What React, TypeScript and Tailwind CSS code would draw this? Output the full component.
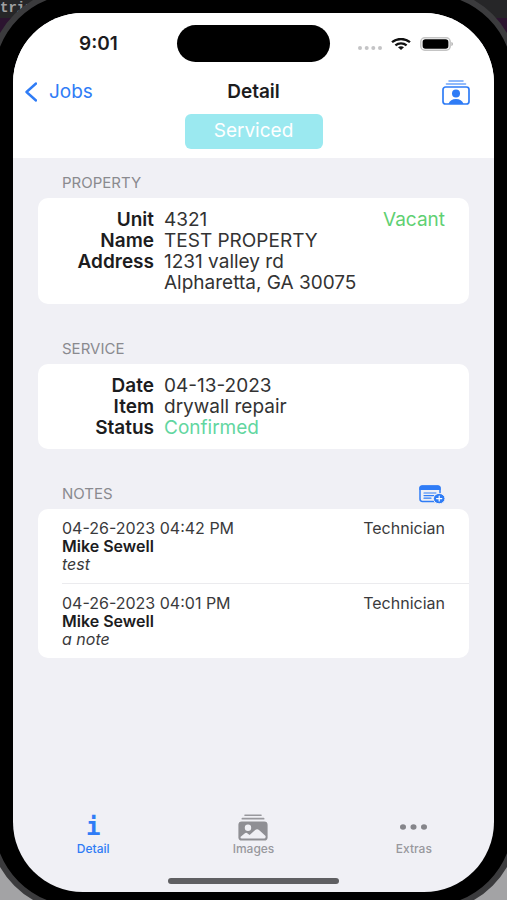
import type { ReactNode } from 'react';

const property = [
  { label: 'Unit', value: '4321' },
  { label: 'Name', value: 'TEST PROPERTY' },
  { label: 'Address', value: '1231 valley rd' },
  { label: '', value: 'Alpharetta, GA 30075' },
];

const service = [
  { label: 'Date', value: '04-13-2023' },
  { label: 'Item', value: 'drywall repair' },
  { label: 'Status', value: 'Confirmed', color: 'text-[#62d6a0]' },
];

const notes = [
  { id: 1, date: '04-26-2023 04:42 PM', author: 'Mike Sewell', text: 'test', role: 'Technician' },
  { id: 2, date: '04-26-2023 04:01 PM', author: 'Mike Sewell', text: 'a note', role: 'Technician' },
];

function WifiIcon() {
  return (
    <svg className="w-5 h-3" viewBox="0 0 20 12" fill="none" stroke="#111" strokeWidth="2.3" preserveAspectRatio="none">
      <path d="M1 4.2C6 -0.1 14 -0.1 19 4.2" />
      <path d="M4.4 7.4C7.6 4.6 12.4 4.6 15.6 7.4" />
      <path d="M7 9.2C8.8 7.8 11.2 7.8 13 9.2L10 12Z" fill="#111" stroke="none" />
    </svg>
  );
}

function BatteryIcon() {
  return (
    <svg className="w-[34px] h-[14px]" viewBox="0 0 34 14" fill="none">
      <rect x="0.8" y="0.8" width="29.4" height="12.4" rx="4" stroke="#c4c4c4" strokeWidth="1.5" />
      <rect x="2.6" y="2.2" width="25.8" height="9.6" rx="2.8" fill="#000" />
      <path d="M31.4 5C33.4 5.6 33.4 8.4 31.4 9Z" fill="#b0b0b0" />
    </svg>
  );
}

function ContactsIcon() {
  return (
    <svg className="w-7 h-[25px]" viewBox="0 0 28 25" fill="none" stroke="#2f7cf6" strokeLinecap="round">
      <path d="M7 1H21" strokeWidth="1.5" opacity="0.7" />
      <path d="M4.5 4H23.5" strokeWidth="1.6" opacity="0.7" />
      <rect x="1" y="7" width="26" height="17" rx="2.6" strokeWidth="1.7" />
      <circle cx="14" cy="13.4" r="4" fill="#2f7cf6" stroke="none" />
      <path d="M6.4 24C7.6 20.4 10.4 18.9 14 18.9S20.4 20.4 21.6 24Z" fill="#2f7cf6" stroke="none" />
    </svg>
  );
}

function AddNoteIcon() {
  return (
    <svg className="w-[26px] h-[19px]" viewBox="0 0 26 19" fill="none">
      <rect x="1" y="1" width="20" height="15.4" rx="2.4" stroke="#2f7cf6" strokeWidth="1.5" />
      <path d="M0.4 5V3A2.6 2.6 0 0 1 3 0.4H19A2.6 2.6 0 0 1 21.6 3V5Z" fill="#2f7cf6" />
      <path d="M5 8H17M5 10.6H15.6M5 13.2H12" stroke="#2f7cf6" strokeWidth="1.2" strokeLinecap="round" />
      <ellipse cx="20.2" cy="13.6" rx="5.8" ry="5.2" fill="#2f7cf6" stroke="#f0f0f5" strokeWidth="1" />
      <path d="M17.6 13.6H22.8M20.2 11.2V16" stroke="#fff" strokeWidth="1.2" strokeLinecap="round" />
    </svg>
  );
}

function ImagesIcon() {
  return (
    <svg className="w-[30px] h-[27px]" viewBox="0 0 30 27" fill="none">
      <path d="M7 1.2H23" stroke="#98989d" strokeWidth="1.6" strokeLinecap="round" />
      <path d="M4.4 4.7H25.6" stroke="#98989d" strokeWidth="1.8" strokeLinecap="round" />
      <rect x="0.4" y="7.4" width="29.2" height="19.2" rx="3.4" fill="#8f8f94" />
      <circle cx="10" cy="13.8" r="3.2" fill="#f0f0f5" />
      <path
        d="M2.4 23L6.6 19.4C7.6 18.6 8.6 18.6 9.6 19.4L11.6 21L17.2 16C18.4 15 19.8 15 21 16L27.6 22V23A1.6 1.6 0 0 1 26 24.6H4A1.6 1.6 0 0 1 2.4 23Z"
        fill="#f0f0f5"
      />
    </svg>
  );
}

function ExtrasIcon() {
  return (
    <svg className="w-[27px] h-[6px]" viewBox="0 0 27 6" fill="#85858a">
      <ellipse cx="3" cy="3" rx="3" ry="2.7" />
      <ellipse cx="13.5" cy="3" rx="3" ry="2.7" />
      <ellipse cx="24" cy="3" rx="3" ry="2.7" />
    </svg>
  );
}

function SectionHeader({ title, children }: { title: string; children?: ReactNode }) {
  return (
    <div className="flex items-center justify-between h-[30px] px-6">
      <h2 className="text-[15px] text-[#8a8a8f]">{title}</h2>
      {children}
    </div>
  );
}

function Fields({ items }: { items: { label: string; value: string; color?: string }[] }) {
  return (
    <dl className="text-[19px] leading-[21px]">
      {items.map((item) => (
        <div key={item.value} className="flex gap-2.5">
          <dt className="w-[92px] shrink-0 text-right font-semibold text-[#1c1c1e]">{item.label}</dt>
          <dd className={item.color ?? 'text-[#333]'}>{item.value}</dd>
        </div>
      ))}
    </dl>
  );
}

function Tab({ label, active, children }: { label: string; active?: boolean; children: ReactNode }) {
  return (
    <button className={`flex-1 flex flex-col items-center ${active ? 'text-[#2f7cf6]' : 'text-[#98989d]'}`}>
      <span className="flex items-center justify-center h-7">{children}</span>
      <span className="text-xs leading-4 font-medium">{label}</span>
    </button>
  );
}

export default function App() {
  return (
    <div className="relative isolate h-screen overflow-hidden bg-[#a3a3a5] font-['Inter',sans-serif]">
      {/* Desktop behind the phone */}
      <div className="absolute inset-x-0 top-0 -z-10 h-1/2 bg-black">
        <div className="h-[18px] bg-[#262628] text-[#a0a0a0] font-['Liberation_Mono',monospace] text-sm leading-4 font-bold">tring</div>
        <div className="h-8 bg-[#2c1430]" />
      </div>

      {/* Phone */}
      <div className="-mx-3 -mt-3 flex h-[calc(100vh+24px)] rounded-[90px] border-6 border-[#3b3b3d] bg-black px-[19px] pt-[19px] pb-[14px]">
        <div className="flex flex-1 flex-col overflow-hidden rounded-[70px] bg-[#f0f0f5]">
          <header className="bg-white h-[145px]">
            <div className="grid grid-cols-[1fr_auto_1fr] items-center pt-3">
              <time className="pl-[66px] text-[19px] leading-5 font-semibold text-[#1c1c1e]">9:01</time>
              <div className="w-[153px] h-[37px] rounded-full bg-black" />
              <div className="flex items-center gap-[9px] pl-7">
                <svg className="w-6 h-1 mt-2" viewBox="0 0 24 4" fill="#c4c4c6">
                  <circle cx="2" cy="2" r="2" />
                  <circle cx="8.7" cy="2" r="2" />
                  <circle cx="15.3" cy="2" r="2" />
                  <circle cx="22" cy="2" r="2" />
                </svg>
                <WifiIcon />
                <BatteryIcon />
              </div>
            </div>

            <nav className="grid grid-cols-3 items-center mt-3 h-9 pl-3 pr-6">
              <a href="#jobs" className="flex items-center gap-3 text-[19px] text-[#2f7cf6]">
                <svg className="w-3 h-5" viewBox="0 0 12 20" fill="none" stroke="currentColor" strokeWidth="2.4" strokeLinecap="round" strokeLinejoin="round">
                  <path d="M11 1.5L1.5 10L11 18.5" />
                </svg>
                Jobs
              </a>
              <h1 className="pl-3 text-center text-[19px] font-semibold text-[#1c1c1e]">Detail</h1>
              <button className="justify-self-end" aria-label="Contacts">
                <ContactsIcon />
              </button>
            </nav>

            <button className="block mx-auto mt-1 w-[138px] h-[35px] rounded-md bg-[#9be9f0] text-[19px] text-white">Serviced</button>
          </header>

          <main className="flex-1 px-[25px] pt-2.5">
            <section>
              <SectionHeader title="PROPERTY" />
              <div className="flex items-start justify-between rounded-[10px] bg-white px-6 py-[11px]">
                <Fields items={property} />
                <span className="text-[19px] leading-[21px] text-[#5fd072]">Vacant</span>
              </div>
            </section>

            <section className="mt-[30px]">
              <SectionHeader title="SERVICE" />
              <div className="rounded-[10px] bg-white px-6 py-[11px]">
                <Fields items={service} />
              </div>
            </section>

            <section className="mt-[30px]">
              <SectionHeader title="NOTES">
                <button aria-label="Add note">
                  <AddNoteIcon />
                </button>
              </SectionHeader>
              <ul className="rounded-[10px] bg-white pl-6">
                {notes.map((note) => (
                  <li key={note.id} className="flex justify-between border-b border-[#ebebee] py-[10px] pr-6 text-base leading-[18px] text-[#3a3a3c] last:border-b-0">
                    <div>
                      <div>{note.date}</div>
                      <div className="font-semibold text-[#1c1c1e]">{note.author}</div>
                      <div className="italic">{note.text}</div>
                    </div>
                    <div>{note.role}</div>
                  </li>
                ))}
              </ul>
            </section>
          </main>

          {/* Tab bar */}
          <footer>
            <div className="flex">
              <Tab label="Detail" active>
                <span aria-hidden="true" className="font-['DejaVu_Sans_Mono',monospace] text-2xl font-bold">i</span>
              </Tab>
              <Tab label="Images">
                <ImagesIcon />
              </Tab>
              <Tab label="Extras">
                <ExtrasIcon />
              </Tab>
            </div>
            <div className="mx-auto mt-[21px] mb-2 w-[171px] h-[6px] rounded-full bg-[#5f5f62]" />
          </footer>
        </div>
      </div>
    </div>
  );
}
